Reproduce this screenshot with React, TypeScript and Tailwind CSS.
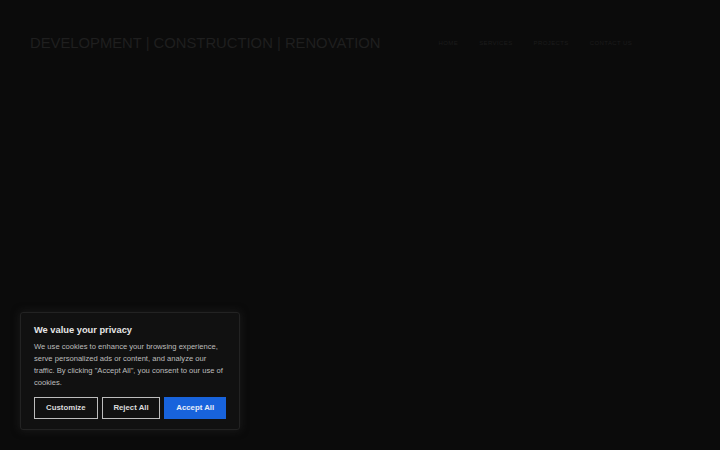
import React from "react";

export default function App() {
  return (
    <div className="relative w-[720px] h-[450px] overflow-hidden bg-[#0b0b0b]" style={{ fontFamily: '"Liberation Sans", Arial, sans-serif' }}>
      <header className="flex items-center pl-[30px] pt-[34px]">
        <div className="text-[14.8px] leading-[18px] tracking-[0px] text-[#1f1f1f] whitespace-nowrap">
          DEVELOPMENT | CONSTRUCTION | RENOVATION
        </div>
        <nav className="flex items-center gap-[21px] ml-[58px] text-[6px] tracking-[0.4px] text-[#1c1c1c]">
          <span>HOME</span>
          <span>SERVICES</span>
          <span>PROJECTS</span>
          <span>CONTACT US</span>
        </nav>
      </header>

      <div className="absolute left-[20px] bottom-[20px] w-[220px] rounded-[3px] border border-[#232323] bg-[#111111] px-[13px] pt-[11px] pb-[10px] shadow-[0_0_8px_rgba(40,40,40,0.6)]">
        <div className="text-[9.3px] font-bold leading-[12px] text-[#e6e6e6]">We value your privacy</div>
        <p className="mt-[5px] text-[7.6px] leading-[12px] text-[#bdbdbd]">
          We use cookies to enhance your browsing experience, serve personalized ads or content, and analyze our traffic. By clicking "Accept All", you consent to our use of cookies.
        </p>
        <div className="mt-[8px] flex gap-[4px]">
          <button className="h-[22px] w-[64px] border border-[#bdbdbd] bg-transparent text-[7.8px] font-semibold text-[#dcdcdc]">Customize</button>
          <button className="h-[22px] w-[59px] border border-[#bdbdbd] bg-transparent text-[7.8px] font-semibold text-[#dcdcdc]">Reject All</button>
          <button className="h-[22px] w-[62px] border border-[#1863dc] bg-[#1863dc] text-[7.8px] font-semibold text-[#e8eefa]">Accept All</button>
        </div>
      </div>
    </div>
  );
}
